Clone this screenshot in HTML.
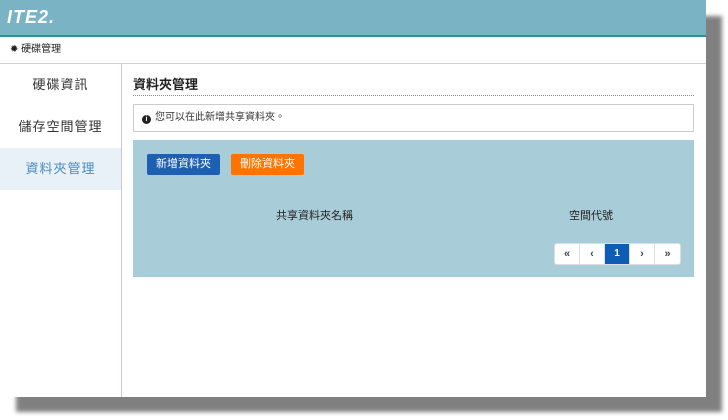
<!DOCTYPE html>
<html><head><meta charset="utf-8"><style>
*{margin:0;padding:0;box-sizing:border-box}
body{width:728px;height:420px;background:#fff;position:relative;overflow:hidden;font-family:"Liberation Sans","Noto Sans CJK TC",sans-serif;color:#333}
.shadow{position:absolute;left:16px;top:16px;width:706px;height:396px;background:#808080;filter:blur(2px)}
.screen{position:absolute;left:0;top:0;width:706px;height:397px;background:#fff;overflow:hidden}
.hdr{height:37px;background:#79b3c4;border-bottom:2px solid #2f8fa3;position:relative}
.logo{position:absolute;left:7px;top:7px;color:#fff;font-weight:bold;font-style:italic;font-size:18px;letter-spacing:1px;font-family:"Liberation Sans",sans-serif}
.bc{height:27px;border-bottom:1px solid #d0d0dc;font-size:10px;line-height:26px;padding-left:10px;color:#222}
.side{position:absolute;left:0;top:64px;width:122px;height:333px;border-right:1px solid #c8c8d8}
.side div{height:42px;text-align:center;line-height:42px;font-size:13px;letter-spacing:1px;color:#333}
.side .act{background:#e8f0f8;color:#4a8ac0}
.title{position:absolute;left:133px;top:74px;font-size:13px;font-weight:bold;color:#222}
.dot{position:absolute;left:133px;top:95px;width:561px;border-top:1px dotted #888}
.info{position:absolute;left:133px;top:104px;width:561px;height:28px;border:1px solid #ccc;font-size:10px;line-height:26px;padding-left:8px;color:#333}
.ic{display:inline-block;width:9px;height:9px;border-radius:50%;background:#222;color:#fff;font-size:7px;line-height:9px;text-align:center;font-weight:bold;vertical-align:-1px;margin-right:4px}
.panel{position:absolute;left:133px;top:140px;width:561px;height:137px;background:#a9cdd8}
.btn{position:absolute;top:14px;height:21px;width:73px;color:#fff;font-size:11px;text-align:center;line-height:21px;border-radius:2px}
.th{position:absolute;top:67px;font-size:11px;color:#222}
.pg{position:absolute;top:103px;left:421px;height:22px;display:flex;border:1px solid #ddd;border-radius:3px;background:#fff}
.pg span{width:25px;height:20px;border-right:1px solid #ddd;text-align:center;font-size:11px;line-height:20px;color:#445;font-weight:bold}
.pg span:last-child{border-right:none}
.pg .a{background:#0d5cb6;color:#fff;font-size:10px}
</style></head><body>
<div class="shadow"></div>
<div class="screen">
<div class="hdr"><div class="logo">ITE2.</div></div>
<div class="bc">✹ 硬碟管理</div>
<div class="side"><div>硬碟資訊</div><div>儲存空間管理</div><div class="act">資料夾管理</div></div>
<div class="title">資料夾管理</div>
<div class="dot"></div>
<div class="info"><span class="ic">i</span>您可以在此新增共享資料夾。</div>
<div class="panel">
<div class="btn" style="left:14px;background:#1d5fb0">新增資料夾</div>
<div class="btn" style="left:98px;background:#ff7300">刪除資料夾</div>
<div class="th" style="left:143px">共享資料夾名稱</div>
<div class="th" style="left:436px">空間代號</div>
<div class="pg"><span>«</span><span>‹</span><span class="a">1</span><span>›</span><span>»</span></div>
</div>
</div>
</body></html>
